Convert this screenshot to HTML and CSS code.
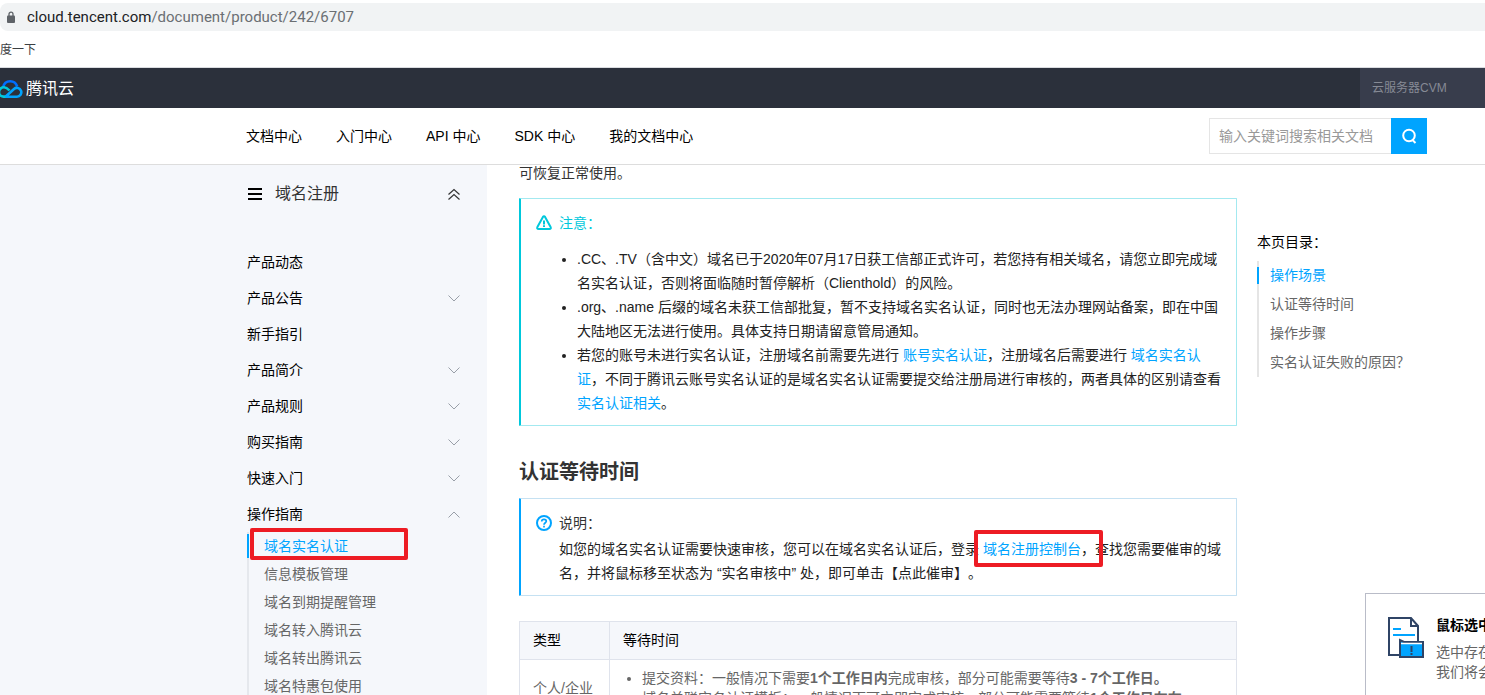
FILE: index.html
```html
<!DOCTYPE html>
<html lang="zh-CN">
<head>
<meta charset="utf-8">
<title>域名实名认证 - 腾讯云</title>
<link rel="stylesheet" href="styles.css">
</head>
<body>
<div class="browser">
  <div class="address">
    <svg class="lock" width="10" height="12" viewBox="0 0 10 12"><path d="M3 5V3.200a2 2 0 0 1 4 0V5" fill="none" stroke="#5f6368" stroke-width="1.300"/><rect x="1" y="4.500" width="8" height="7.500" rx="1" fill="#5f6368"/></svg>
    <span class="url"><span class="host">cloud.tencent.com</span>/document/product/242/6707</span>
  </div>
  <div class="bookmarks">度一下</div>
</div>
<header class="topbar">
  <a class="brand" href="#">
    <svg width="23" height="20" viewBox="0 0 23 20" fill="none" stroke-width="2.600"><path d="M3 8.500C4 4 7 2.300 10.200 2.300c3.600 0 6 2.200 7 5.200" stroke="#006eff"/><path d="M9.500 11.500C7.500 9.300 6 8.300 4 8.300c-3 0-5 2.200-5 4.800 0 2.700 2 4.500 4.500 4.500h3" stroke="#00c8dc"/><path d="M5.500 17.700h11.500a4.400 4.400 0 1 0-3-7.700L5.500 17.700" stroke="#00a3ff"/></svg>
    <span>腾讯云</span>
  </a>
  <div class="promo">云服务器CVM</div>
</header>
<div class="subbar">
  <nav class="links">
    <a href="#">文档中心</a><a href="#">入门中心</a><a href="#">API 中心</a><a href="#">SDK 中心</a><a href="#">我的文档中心</a>
  </nav>
  <form class="search">
    <input type="text" aria-label="搜索文档" placeholder="输入关键词搜索相关文档">
    <button type="button" aria-label="搜索"><svg width="16" height="16" viewBox="0 0 16 16" fill="none" stroke="#fff" stroke-width="2"><circle cx="8" cy="7.500" r="5.800"/><path d="M11 11.500l3.500 3.500"/></svg></button>
  </form>
</div>
<div class="page">
  <aside class="sidebar">
    <div class="side-head">
      <svg width="16" height="14" viewBox="0 0 16 14"><path d="M1 2h14M1 7h14M1 12h14" stroke="#000" stroke-width="2"/></svg>
      <span class="side-title">域名注册</span>
      <svg width="12" height="12" viewBox="0 0 12 12" fill="none" stroke="#333" stroke-width="1.200"><path d="M.5 6.500L6 1.500l5.500 5M.5 11.500L6 6.500l5.500 5"/></svg>
    </div>
    <ul class="menu">
      <li><a href="#">产品动态</a></li>
      <li><a href="#">产品公告</a><svg class="arrow" viewBox="0 0 12 7"><path d="M.5.500L6 6 11.500.500"/></svg></li>
      <li><a href="#">新手指引</a></li>
      <li><a href="#">产品简介</a><svg class="arrow" viewBox="0 0 12 7"><path d="M.5.500L6 6 11.500.500"/></svg></li>
      <li><a href="#">产品规则</a><svg class="arrow" viewBox="0 0 12 7"><path d="M.5.500L6 6 11.500.500"/></svg></li>
      <li><a href="#">购买指南</a><svg class="arrow" viewBox="0 0 12 7"><path d="M.5.500L6 6 11.500.500"/></svg></li>
      <li><a href="#">快速入门</a><svg class="arrow" viewBox="0 0 12 7"><path d="M.5.500L6 6 11.500.500"/></svg></li>
      <li><a href="#">操作指南</a><svg class="arrow" viewBox="0 0 12 7"><path d="M.5 6.500L6 1l5.500 5.500"/></svg></li>
    </ul>
    <ul class="submenu">
      <li class="active"><a href="#">域名实名认证</a></li>
      <li><a href="#">信息模板管理</a></li>
      <li><a href="#">域名到期提醒管理</a></li>
      <li><a href="#">域名转入腾讯云</a></li>
      <li><a href="#">域名转出腾讯云</a></li>
      <li><a href="#">域名特惠包使用</a></li>
    </ul>
  </aside>
  <main class="doc">
    <p class="lead">可恢复正常使用。</p>
    <section class="notice warn">
      <h3 class="notice-title"><svg width="16" height="16" viewBox="0 0 16 16" fill="none" stroke="#00c8dc" stroke-width="2"><path d="M6.800 2.200Q8 .500 9.200 2.200L14.600 12q.800 2-1.200 2H2.600q-2 0-1.200-2z" stroke-linejoin="round"/><path d="M8 5.500v4M8 10.300v1.700"/></svg>注意：</h3>
      <ul class="notice-list">
        <li>.CC、.TV（含中文）域名已于2020年07月17日获工信部正式许可，若您持有相关域名，请您立即完成域名实名认证，否则将面临随时暂停解析（Clienthold）的风险。</li>
        <li>.org、.name 后缀的域名未获工信部批复，暂不支持域名实名认证，同时也无法办理网站备案，即在中国大陆地区无法进行使用。具体支持日期请留意管局通知。</li>
        <li>若您的账号未进行实名认证，注册域名前需要先进行 <a href="#">账号实名认证</a>，注册域名后需要进行 <a href="#">域名实名认证</a>，不同于腾讯云账号实名认证的是域名实名认证需要提交给注册局进行审核的，两者具体的区别请查看 <a href="#">实名认证相关</a>。</li>
      </ul>
    </section>
    <h2>认证等待时间</h2>
    <section class="notice info">
      <h3 class="notice-title"><svg width="16" height="16" viewBox="0 0 16 16" fill="none" stroke="#00a4ff" stroke-width="2"><circle cx="8" cy="8" r="7"/><path d="M5.700 6.500c0-3 4.600-2.800 4.600-.200C10.300 7.700 8 7.800 8 9.700M8 10.700v1.800" stroke-width="1.700"/></svg>说明：</h3>
      <p>如您的域名实名认证需要快速审核，您可以在域名实名认证后，登录 <a class="marked" href="#">域名注册控制台</a>，查找您需要催审的域名，并将鼠标移至状态为 “实名审核中” 处，即可单击【点此催审】。</p>
    </section>
    <table class="times">
      <thead><tr><th class="kind">类型</th><th>等待时间</th></tr></thead>
      <tbody><tr><td>个人/企业</td><td><ul>
        <li>提交资料：一般情况下需要<b>1个工作日内</b>完成审核，部分可能需要等待<b>3 - 7个工作日。</b></li>
        <li>域名关联实名认证模板：一般情况下可立即完成审核，部分可能需要等待<b>1个工作日左右</b></li>
      </ul></td></tr></tbody>
    </table>
  </main>
  <nav class="toc">
    <div class="toc-title">本页目录：</div>
    <ul>
      <li class="active"><a href="#">操作场景</a></li>
      <li><a href="#">认证等待时间</a></li>
      <li><a href="#">操作步骤</a></li>
      <li><a href="#">实名认证失败的原因？</a></li>
    </ul>
  </nav>
</div>
<div class="tip">
  <svg width="36" height="42" viewBox="0 0 36 42" fill="none" stroke="#2f4466" stroke-width="2"><path d="M12 38H1V1h22l7 8v15M23 1v8h7"/><path d="M5 12h8M5 18h22" stroke="#00a4ff"/><path d="M12 40V23l4 2h19v15z" fill="#00a4ff"/><path d="M13 26.500h21" stroke="#fff" stroke-width="1.500"/><path d="M23.500 29v6M23.500 36v2"/></svg>
  <div class="tip-text"><strong>鼠标选中</strong><span>选中存在<br>我们将会</span></div>
</div>
</body>
</html>
```

FILE: styles.css
```css
*, *::after { box-sizing: border-box; }
body {
  margin: 0;
  height: 100vh;
  overflow: hidden;
  position: relative;
  display: flex;
  flex-direction: column;
  background: #fff;
  color: #000;
  font: 14px/24px "Liberation Sans", "Noto Sans CJK SC", sans-serif;
  text-spacing-trim: space-all;
}
a { color: inherit; text-decoration: none; }
ul { list-style: none; margin: 0; padding: 0; }
svg { flex: none; display: block; }

.browser { padding-top: 3px; border-bottom: 1px solid #dadce0; }
.address {
  display: flex;
  align-items: center;
  gap: 11px;
  height: 28px;
  padding-left: 6px;
  background: #f1f3f4;
  border-radius: 8px 0 0 8px;
  font: 15px/28px Roboto, sans-serif;
  color: #6b6f73;
}
.host { color: #202124; }
.bookmarks { height: 36px; line-height: 38px; font-size: 12px; color: #3c4043; }

.topbar { display: flex; justify-content: space-between; height: 40px; background: #2b303b; flex: none; }
.brand { display: flex; align-items: center; gap: 3px; padding-top: 2px; color: #fff; font-size: 16px; }
.promo { width: 125px; padding-left: 12px; line-height: 40px; font-size: 12px; color: #868a95; background: #383d4c; }

.subbar {
  display: flex;
  flex: none;
  justify-content: space-between;
  align-items: center;
  height: 57px;
  padding: 0 58px 0 246px;
  border-bottom: 1px solid #ddd;
}
.links { display: flex; gap: 34px; }
.search { display: flex; height: 36px; }
.search input {
  width: 182px;
  padding: 0 9px;
  border: 1px solid #e5e5e5;
  border-right: 0;
  font: inherit;
}
.search input::placeholder { color: #999; }
.search button { width: 36px; padding: 0 0 0 10px; border: 0; background: #00a4ff; }

.page { display: flex; flex: 1; min-height: 0; overflow: hidden; }
.sidebar { flex: none; width: 487px; padding: 11px 27px 0 247px; background: #f5f7fb; }
.side-head { display: flex; align-items: center; height: 36px; }
.side-title { flex: 1; margin-left: 12px; font-size: 16px; color: #333; }
.menu { margin-top: 32px; }
.menu li { display: flex; align-items: center; justify-content: space-between; height: 36px; }
.arrow { width: 12px; height: 7px; fill: none; stroke: #999fa8; }
.submenu { border-left: 2px solid #e5e8ed; color: #666; }
.submenu li { height: 28px; padding-left: 15px; line-height: 28px; }
.submenu .active {
  position: relative;
  margin-left: -2px;
  padding-left: 17px;
  color: #00a4ff;
  background: linear-gradient(#00a4ff, #00a4ff) 0 2px / 2px 24px no-repeat;
}
.submenu .active::after {
  content: "";
  position: absolute;
  left: 3px;
  top: -4px;
  width: 158px;
  height: 32px;
  border: 4px solid #ed1c24;
  border-radius: 2px;
}

.doc { flex: 1; min-width: 0; padding-left: 32px; color: #333; }
.lead { margin: -4px 0 13px; }
.notice { padding: 12px 14px 10px 15px; border: 1px solid; border-radius: 1px; color: #222; }
.warn { border-color: #a3e9f0; border-left: 2px solid #00c8dc; }
.info { border-color: #c5e1f2; border-left: 2px solid #00a4ff; }
.notice-title { display: flex; align-items: center; gap: 7px; margin: 0; font-size: 14px; font-weight: 400; color: #333; }
.warn .notice-title { margin-bottom: 12px; color: #00c8dc; }
.info .notice-title { margin-bottom: 2px; }
.notice p { margin: 0; padding-left: 23px; }
.notice-list { padding-left: 41px; list-style: disc; }
.notice a { color: #00a4ff; }
.marked { position: relative; }
.marked::after {
  content: "";
  position: absolute;
  left: -9px;
  right: -22px;
  top: -11px;
  height: 37px;
  border: 4px solid #ed1c24;
  border-radius: 2px;
}
h2 { margin: 32px 0 12px; font-size: 20px; line-height: 28px; color: #333; }

.times { width: 100%; margin-top: 25px; border-collapse: collapse; line-height: 20px; color: #666; }
.times th, .times td { padding: 9px 13px; border: 1px solid #dfe3ec; text-align: left; font-weight: 400; }
.times th { padding: 8px 13px 9px; background: #f5f7fb; color: #000; }
.kind { width: 90px; }
.times ul { padding-left: 19px; list-style: disc; }
.times td { padding: 8px 13px; white-space: nowrap; }

.toc { flex: none; width: 248px; padding: 65px 0 0 20px; }
.toc ul { margin-top: 7px; border-left: 2px solid #e5e5e5; color: #666; }
.toc li { height: 29px; padding-left: 11px; line-height: 29px; }
.toc .active {
  margin-left: -2px;
  padding-left: 13px;
  color: #00a4ff;
  background: linear-gradient(#00a4ff, #00a4ff) 0 6px / 2px 17px no-repeat;
}

.tip {
  position: absolute;
  right: 0;
  bottom: 0;
  display: flex;
  gap: 12px;
  width: 120px;
  height: 102px;
  padding: 23px 0 0 22px;
  overflow: hidden;
  white-space: nowrap;
  background: #fff;
  border: 1px solid #b9bcc8;
  border-width: 1px 0 0 1px;
  line-height: 20px;
  color: #666;
}
.tip-text strong { display: block; margin: -2px 0 7px; color: #000; }
```
